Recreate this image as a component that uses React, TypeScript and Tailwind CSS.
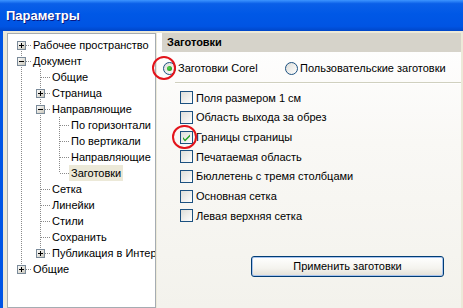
import React from 'react';

type Row = { t: string; d: number; exp?: '+' | '-'; sel?: boolean };

const ROWS: Row[] = [
  { t: 'Рабочее пространство', d: 0, exp: '+' },
  { t: 'Документ', d: 0, exp: '-' },
  { t: 'Общие', d: 1 },
  { t: 'Страница', d: 1, exp: '+' },
  { t: 'Направляющие', d: 1, exp: '-' },
  { t: 'По горизонтали', d: 2 },
  { t: 'По вертикали', d: 2 },
  { t: 'Направляющие', d: 2 },
  { t: 'Заготовки', d: 2, sel: true },
  { t: 'Сетка', d: 1 },
  { t: 'Линейки', d: 1 },
  { t: 'Стили', d: 1 },
  { t: 'Сохранить', d: 1 },
  { t: 'Публикация в Интернете', d: 1, exp: '+' },
  { t: 'Общие', d: 0, exp: '+' },
];

const CHECKS = [
  'Поля размером 1 см',
  'Область выхода за обрез',
  'Границы страницы',
  'Печатаемая область',
  'Бюллетень с тремя столбцами',
  'Основная сетка',
  'Левая верхняя сетка',
];

// is there a later row at this level before the branch closes
const hasNext = (k: number, level: number) => {
  for (let j = k + 1; j < ROWS.length; j++) {
    if (ROWS[j].d <= level) return ROWS[j].d === level;
  }
  return false;
};

const DOT = '#8a8a8a';

function Cell({ up, down, branch, exp }: { up?: boolean; down?: boolean; branch?: boolean; exp?: '+' | '-' }) {
  return (
    <svg width="19" height="16" className="shrink-0" shapeRendering="crispEdges">
      {up && <line x1="9.5" y1="0" x2="9.5" y2={branch ? 8 : 16} stroke={DOT} strokeDasharray="1 1" />}
      {down && <line x1="9.5" y1="8" x2="9.5" y2="16" stroke={DOT} strokeDasharray="1 1" />}
      {branch && <line x1="10" y1="8.5" x2="19" y2="8.5" stroke={DOT} strokeDasharray="1 1" />}
      {exp && (
        <g>
          <defs>
            <linearGradient id="eg" x1="0" y1="0" x2="1" y2="1">
              <stop offset="0" stopColor="#ffffff" />
              <stop offset="1" stopColor="#c6c3b6" />
            </linearGradient>
          </defs>
          <rect x="5.5" y="4.5" width="8" height="8" fill="url(#eg)" stroke="#7a8a99" />
          <line x1="7" y1="8.5" x2="12" y2="8.5" stroke="#000" />
          {exp === '+' && <line x1="9.5" y1="6" x2="9.5" y2="11" stroke="#000" />}
        </g>
      )}
    </svg>
  );
}

function Tree() {
  return (
    <div className="mt-[2px] ml-[4px] w-[149px] shrink-0 overflow-hidden border border-[#a5acb2] bg-white pt-[3px] pl-[4px]">
      {ROWS.map((r, k) => (
        <div key={k} className="flex h-[16px] items-center whitespace-nowrap">
          {Array.from({ length: r.d }).map((_, i) => (
            <Cell key={i} up={hasNext(k, i)} />
          ))}
          <Cell up={k > 0} branch down={hasNext(k, r.d)} exp={r.exp} />
          <span className={`px-[2px] leading-[16px] ${r.sel ? 'bg-[#ece9d8]' : ''}`}>{r.t}</span>
        </div>
      ))}
    </div>
  );
}

function Radio({ on }: { on?: boolean }) {
  return (
    <svg width="13" height="13" className="shrink-0">
      <defs>
        <linearGradient id="rg" x1="0" y1="0" x2="1" y2="1">
          <stop offset="0" stopColor="#dcdcd7" />
          <stop offset="1" stopColor="#ffffff" />
        </linearGradient>
        <radialGradient id="rd" cx="0.4" cy="0.4" r="0.6">
          <stop offset="0" stopColor="#55d551" />
          <stop offset="1" stopColor="#21a121" />
        </radialGradient>
      </defs>
      <circle cx="6.5" cy="6.5" r="6" fill="url(#rg)" stroke="#1c5180" />
      {on && <circle cx="6.5" cy="6.5" r="2.5" fill="url(#rd)" />}
    </svg>
  );
}

function Check({ on }: { on?: boolean }) {
  return (
    <svg width="13" height="13" className="shrink-0" shapeRendering="crispEdges">
      <defs>
        <linearGradient id="cg" x1="0" y1="0" x2="1" y2="1">
          <stop offset="0" stopColor="#dcdcd7" />
          <stop offset="1" stopColor="#ffffff" />
        </linearGradient>
      </defs>
      <rect x="0.5" y="0.5" width="12" height="12" fill="url(#cg)" stroke="#1c5180" />
      {on && <path d="M3 6 L5 8.5 L10 3.5 L10 5.5 L5 10.5 L3 8 Z" fill="#21a121" shapeRendering="auto" />}
    </svg>
  );
}

export default function App() {
  return (
    <div className="relative flex h-[308px] w-[463px] flex-col overflow-hidden bg-[#ece9d8] text-[11px] text-black font-['Liberation_Sans',Arial,sans-serif]">
      <div className="flex h-[31px] shrink-0 items-center bg-[linear-gradient(180deg,#3d95ff_0%,#0a5fe8_12%,#0058e6_45%,#0054e3_85%,#0046c8_100%)] pl-[6px]">
        <span className="text-[13px] font-bold text-white [text-shadow:1px_1px_0_#0a1883]">Параметры</span>
      </div>
      <div className="flex flex-1 border-l-[3px] border-[#0055e5]">
        <Tree />
        <div className="ml-[1px] mt-[2px] flex w-[304px] flex-col bg-[linear-gradient(180deg,#ffffff_0%,#f9f8f5_40%,#f3f2ec_100%)]">
          <div className="ml-[5px] flex h-[19px] shrink-0 items-center bg-[#d6d3ca] pl-[5px] font-bold">Заготовки</div>
          <div className="mt-[8px] flex h-[16px] items-center pl-[6px]">
            <div className="flex w-[122px] items-center gap-[2px]">
              <Radio on />
              <span>Заготовки Corel</span>
            </div>
            <div className="flex items-center gap-[2px]">
              <Radio />
              <span>Пользовательские заготовки</span>
            </div>
          </div>
          <div className="ml-[18px] mt-[6px] h-[2px] border-t border-b border-t-[#d0d0bf] border-b-white" />
          <div className="mt-[4px] flex flex-col pl-[23px]">
            {CHECKS.map((c, i) => (
              <div key={c} className="flex h-[19.7px] items-center gap-[3px]">
                <Check on={i === 2} />
                <span>{c}</span>
              </div>
            ))}
          </div>
          <div className="mt-[30px] flex justify-end pr-[17px]">
            <button className="h-[21px] w-[193px] rounded-[3px] border border-[#003c74] bg-[linear-gradient(180deg,#ffffff_0%,#f4f3ee_60%,#e3e0d6_100%)] shadow-[inset_0_0_0_1px_#a9c4ee]">
              Применить заготовки
            </button>
          </div>
        </div>
      </div>
      <div className="pointer-events-none absolute left-[152px] top-[56px] h-[24px] w-[24px] rounded-full border-2 border-[#e3141b]" />
      <div className="pointer-events-none absolute left-[172px] top-[125px] h-[24px] w-[25px] rounded-full border-2 border-[#e3141b]" />
    </div>
  );
}
